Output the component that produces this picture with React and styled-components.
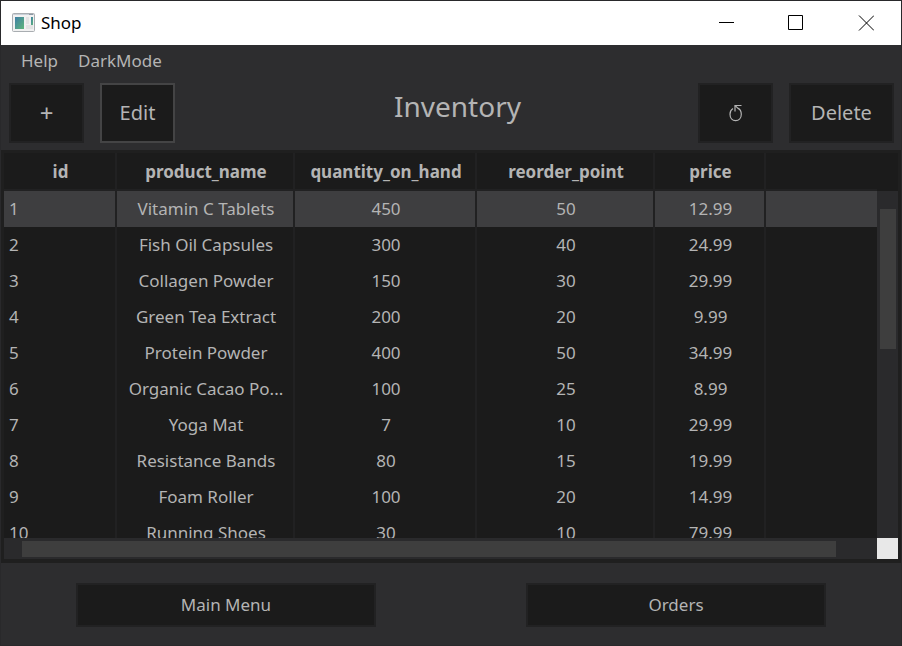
import React from 'react';
import styled, { createGlobalStyle } from 'styled-components';

const GlobalStyle = createGlobalStyle`
  * { box-sizing: border-box; }
  html, body { margin: 0; }
  body {
    background: #2d2d2f;
    color: #b4b4b4;
    font: 17px/24px "Noto Sans", sans-serif;
  }
  button { font: inherit; color: inherit; margin: 0; }
`;

const Window = styled.div`
  display: flex;
  flex-direction: column;
  height: 100vh;
  min-height: 400px;
  border: 1px solid #29292b;
  overflow: hidden;
`;

const TitleBar = styled.header`
  display: flex;
  align-items: center;
  flex: none;
  height: 44px;
  padding-left: 11px;
  background: #fff;
  color: #000;
`;

const WindowName = styled.span`
  flex: 1;
  padding-left: 6px;
`;

const CaptionButton = styled.button`
  display: flex;
  align-items: center;
  justify-content: center;
  width: 70px;
  height: 44px;
  padding: 0;
  border: 0;
  background: transparent;
`;

const MenuBar = styled.nav`
  display: flex;
  flex: none;
  gap: 20px;
  height: 32px;
  padding: 0 20px;
`;

const MenuItem = styled.button`
  height: 32px;
  padding: 0;
  border: 0;
  background: transparent;
`;

const PushButton = styled.button`
  flex: none;
  width: ${(p) => p.$width}px;
  height: ${(p) => (p.$large ? 60 : 44)}px;
  padding: 0;
  border: 2px solid ${(p) => (p.$focused ? '#444445' : '#222223')};
  background: #1b1b1b;
  font-size: ${(p) => (p.$large ? 20 : 17)}px;
  display: flex;
  align-items: center;
  justify-content: center;
`;

const SymbolButton = styled(PushButton)`
  font-size: 24px;
`;

const Toolbar = styled.div`
  display: flex;
  flex: none;
  gap: 16px;
  padding: 6px 7px 7px 8px;
`;

const Title = styled.h1`
  flex: 1;
  margin: 0;
  padding-left: 42px;
  font-size: 28px;
  line-height: 46px;
  font-weight: 400;
  text-align: center;
`;

const TablePanel = styled.main`
  flex: 1;
  min-height: 0;
  display: grid;
  grid-template-columns: minmax(0, 1fr) 21px;
  grid-template-rows: 38px minmax(0, 1fr) 21px;
  border: solid #1f1f1f;
  border-width: 3px 3px 4px;
  background: #1b1b1b;
`;

const TableViewport = styled.div`
  grid-column: 1;
  grid-row: 1 / 3;
  overflow: hidden;
`;

const Table = styled.table`
  width: 100%;
  table-layout: fixed;
  border-collapse: separate;
  border-spacing: 0;
`;

const Column = styled.col`
  width: ${(p) => (p.$width ? `${p.$width}px` : 'auto')};
`;

const HeadCell = styled.th`
  height: 38px;
  padding: 2px 0 0 2px;
  border-right: ${(p) => (p.$last ? 0 : 2)}px solid #212122;
  border-bottom: 2px solid #212122;
  font-size: 17px;
  font-weight: 700;
`;

const Row = styled.tr`
  background: ${(p) => (p.$selected ? '#3e3e40' : '#1b1b1b')};
`;

const Cell = styled.td`
  height: 36px;
  padding: ${(p) => (p.$first ? '0 5px' : '0 8px 0 10px')};
  border-right: ${(p) => (p.$last ? 0 : 2)}px solid #212122;
  text-align: ${(p) => (p.$first ? 'left' : 'center')};
  white-space: nowrap;
  overflow: hidden;
  text-overflow: ellipsis;
`;

const VerticalTrack = styled.div`
  grid-column: 2;
  grid-row: 2;
  padding: 18px 2px 18px 3px;
  background: #2a2a2c;
`;

const HorizontalTrack = styled.div`
  grid-column: 1;
  grid-row: 3;
  padding: 3px 18px 2px;
  background: #2a2a2c;
`;

const VerticalThumb = styled.div`
  height: 45%;
  background: #3e3e3e;
`;

const HorizontalThumb = styled.div`
  width: 97.3%;
  height: 16px;
  background: #3e3e3e;
`;

const Corner = styled.div`
  grid-column: 2;
  grid-row: 3;
  background: #e8e8e8;
`;

const Footer = styled.footer`
  flex: none;
  display: grid;
  grid-template-columns: 1fr 1fr;
  justify-items: center;
  padding: 20px 0 18px;
`;

const columns = [
  { name: 'id', width: 113 },
  { name: 'product_name', width: 178 },
  { name: 'quantity_on_hand', width: 182 },
  { name: 'reorder_point', width: 178 },
  { name: 'price', width: 111 },
  { name: '' },
];

const products = [
  ['1', 'Vitamin C Tablets', '450', '50', '12.99'],
  ['2', 'Fish Oil Capsules', '300', '40', '24.99'],
  ['3', 'Collagen Powder', '150', '30', '29.99'],
  ['4', 'Green Tea Extract', '200', '20', '9.99'],
  ['5', 'Protein Powder', '400', '50', '34.99'],
  ['6', 'Organic Cacao Po...', '100', '25', '8.99'],
  ['7', 'Yoga Mat', '7', '10', '29.99'],
  ['8', 'Resistance Bands', '80', '15', '19.99'],
  ['9', 'Foam Roller', '100', '20', '14.99'],
  ['10', 'Running Shoes', '30', '10', '79.99'],
];

const AppIcon = () => (
  <svg width="23" height="20" viewBox="0 0 23 20" aria-hidden="true">
    <defs>
      <linearGradient id="pane" x1="0" y1="0" x2="1" y2="1">
        <stop offset="0" stopColor="#3f7fa6" />
        <stop offset="1" stopColor="#5fb67a" />
      </linearGradient>
    </defs>
    <rect x="0.5" y="0.5" width="22" height="18" rx="1" fill="#f1f1f1" stroke="#a9adb1" />
    <path d="M1 1.5h21" stroke="#c9d0d8" />
    <path d="M17 1.5h4" stroke="#8e99a5" />
    <rect x="3" y="4" width="9" height="12" fill="url(#pane)" />
    <path d="M14 4h3v7h-3zM14 12h7v4h-7z" fill="#e3e3e3" />
    <rect x="19" y="4" width="2" height="8" fill="url(#pane)" />
  </svg>
);

const CaptionIcon = ({ d }) => (
  <svg width="16" height="16" viewBox="0 0 16 16" fill="none" stroke="#000" aria-hidden="true">
    <path d={d} />
  </svg>
);

const RefreshIcon = () => (
  <svg width="14" height="18" viewBox="0 0 14 18" fill="none" stroke="#b4b4b4" strokeWidth="1.2" aria-hidden="true">
    <path d="M4 4.500C2 5.700 1 7.800 1 10.300c0 3.800 2.300 6.400 5.600 6.400s5.700-2.600 5.700-6.400c0-3-1.300-5.200-3.600-6.200L6 1.500" />
    <path d="M6 7.500V1.500H12.500" />
  </svg>
);

export default function App() {
  return (
    <>
      <GlobalStyle />
      <Window>
        <TitleBar>
          <AppIcon />
          <WindowName>Shop</WindowName>
          <CaptionButton aria-label="Minimize"><CaptionIcon d="M1 7.500h15" /></CaptionButton>
          <CaptionButton aria-label="Maximize"><CaptionIcon d="M.5.5h14v14H.5z" /></CaptionButton>
          <CaptionButton aria-label="Close"><CaptionIcon d="M1 .5l15 15M16 .5l-15 15" /></CaptionButton>
        </TitleBar>
        <MenuBar>
          <MenuItem>Help</MenuItem>
          <MenuItem>DarkMode</MenuItem>
        </MenuBar>
        <Toolbar>
          <SymbolButton $width={75} $large>+</SymbolButton>
          <PushButton $width={75} $large $focused>Edit</PushButton>
          <Title>Inventory</Title>
          <PushButton $width={75} $large aria-label="Refresh"><RefreshIcon /></PushButton>
          <PushButton $width={105} $large>Delete</PushButton>
        </Toolbar>
        <TablePanel>
          <TableViewport>
            <Table>
              <colgroup>
                {columns.map((c) => <Column key={c.name} $width={c.width} />)}
              </colgroup>
              <thead>
                <tr>
                  {columns.map((c) => <HeadCell key={c.name} $last={!c.name}>{c.name}</HeadCell>)}
                </tr>
              </thead>
              <tbody>
                {products.map((p, r) => (
                  <Row key={p[0]} $selected={r === 0}>
                    {p.map((value, i) => <Cell key={columns[i].name} $first={i === 0}>{value}</Cell>)}
                    <Cell $last />
                  </Row>
                ))}
              </tbody>
            </Table>
          </TableViewport>
          <VerticalTrack><VerticalThumb /></VerticalTrack>
          <HorizontalTrack><HorizontalThumb /></HorizontalTrack>
          <Corner />
        </TablePanel>
        <Footer>
          <PushButton $width={300}>Main Menu</PushButton>
          <PushButton $width={300}>Orders</PushButton>
        </Footer>
      </Window>
    </>
  );
}
